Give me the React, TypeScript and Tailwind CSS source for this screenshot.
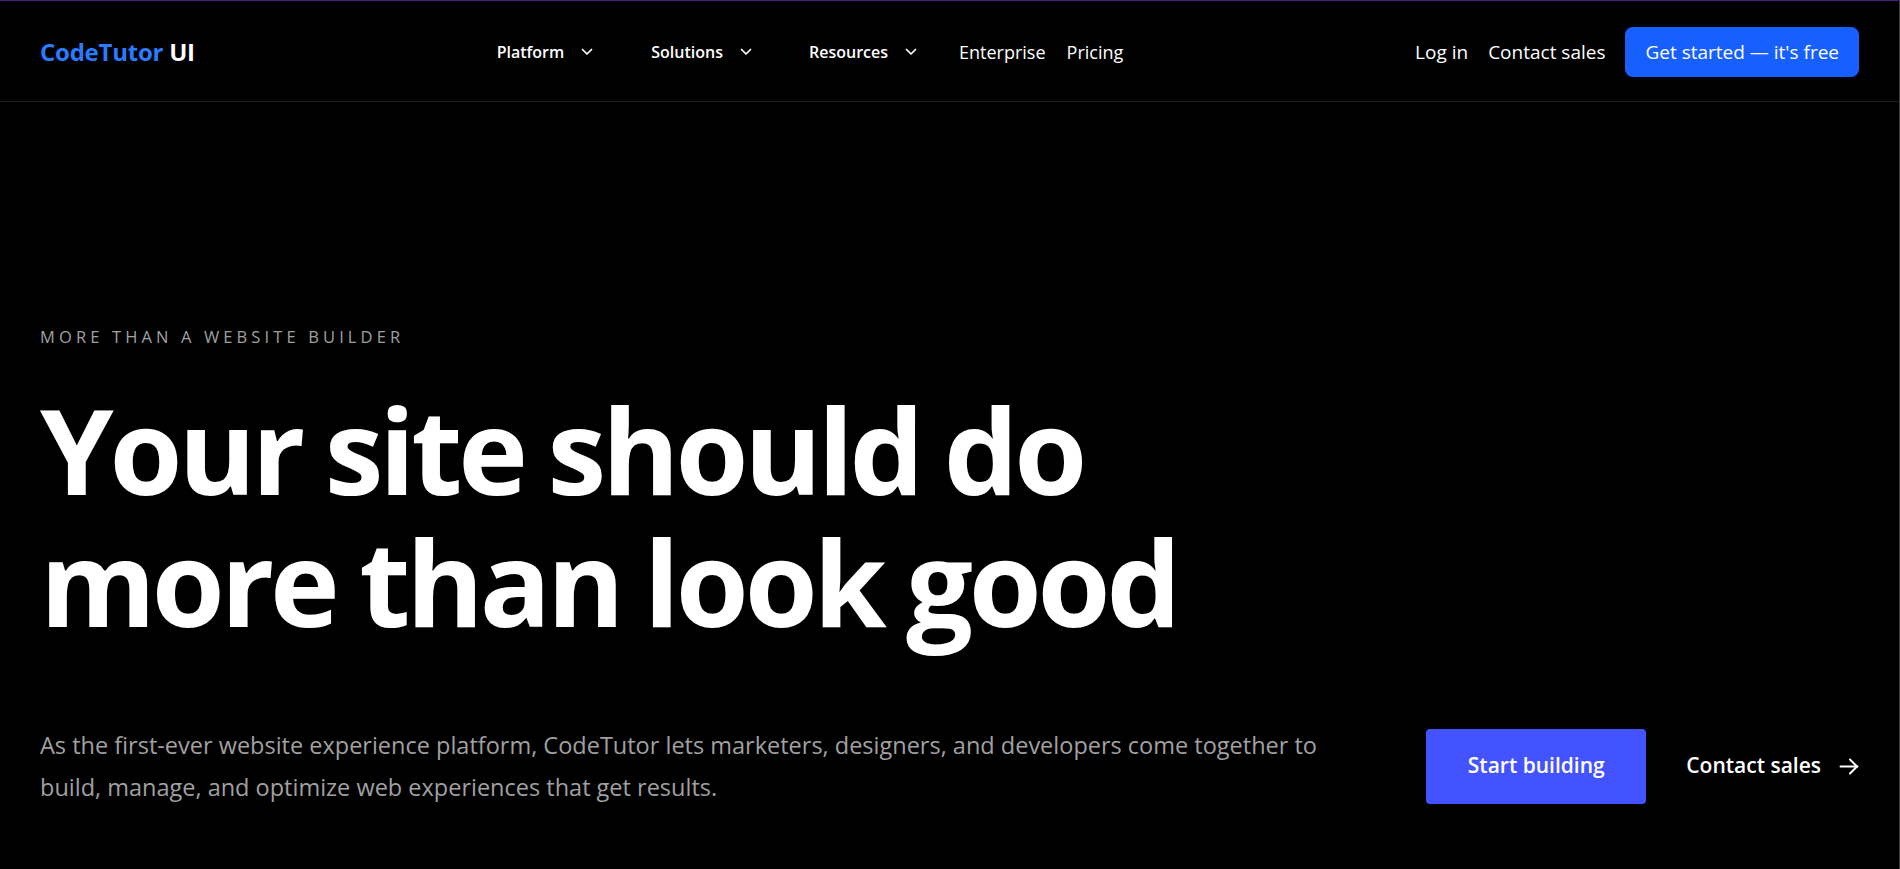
import React from 'react';

function Chevron() {
  return (
    <svg width="12" height="8" viewBox="0 0 12 8" fill="none" stroke="currentColor" strokeWidth="1.75" strokeLinecap="round" strokeLinejoin="round">
      <path d="M1.5 1.5l4.5 4.5 4.5-4.5" />
    </svg>
  );
}

function Arrow() {
  return (
    <svg width="20" height="17" viewBox="0 0 20 17" fill="none" stroke="currentColor" strokeWidth="2" strokeLinecap="round" strokeLinejoin="round">
      <path d="M1.5 8.5h17" />
      <path d="M11 1.5l7 7-7 7" />
    </svg>
  );
}

function NavDropdown({ label }: { label: string }) {
  return (
    <button className="flex items-center gap-[17px] text-[16px] font-semibold text-white">
      <span>{label}</span>
      <Chevron />
    </button>
  );
}

export default function App() {
  return (
    <div className="min-h-screen bg-black border-t border-[#41207a] border-r border-r-[#3a3a3a] font-['Open_Sans',sans-serif] text-white">
      {/* Top navigation */}
      <header className="h-[101px] pt-[2px] border-b border-[#1f1f1f] px-10 flex items-center justify-between">
        <a href="#" className="text-[24px] font-bold tracking-[-0.01em]">
          <span className="text-[#2a7bff]">CodeTutor</span> <span className="text-white">UI</span>
        </a>

        <nav className="ml-[10px] flex items-center">
          <NavDropdown label="Platform" />
          <div className="ml-[58px]">
            <NavDropdown label="Solutions" />
          </div>
          <div className="ml-[57px]">
            <NavDropdown label="Resources" />
          </div>
          <a href="#" className="ml-[42px] text-[18px]">Enterprise</a>
          <a href="#" className="ml-[21px] text-[18px]">Pricing</a>
        </nav>

        <div className="flex items-center gap-5 text-[19px]">
          <a href="#">Log in</a>
          <a href="#">Contact sales</a>
          <a href="#" className="h-[50px] px-5 flex items-center rounded-lg bg-[#175fff] text-white">
            Get started — it's free
          </a>
        </div>
      </header>

      {/* Hero */}
      <main className="px-10">
        <p className="mt-[223px] text-[16.5px] leading-6 font-medium tracking-[0.25em] text-[#a0a0a0] uppercase">
          More than a website builder
        </p>
        <h1 className="mt-[35px] text-[118px] leading-[132px] font-bold tracking-[-0.035em] [word-spacing:-3px] text-white">
          <span className="block">Your site should do</span>
          <span className="block">more than look good</span>
        </h1>

        <div className="mt-[76px] flex items-center justify-between">
          <p className="text-[23.5px] leading-[42px] text-[#a0a0a0] whitespace-nowrap">
            As the first-ever website experience platform, CodeTutor lets marketers, designers, and developers come together to
            <br />
            build, manage, and optimize web experiences that get results.
          </p>
          <div className="flex items-center gap-10">
            <a href="#" className="w-[220px] h-[75px] flex items-center justify-center rounded bg-[#4353ff] text-[21px] font-semibold text-white">
              Start building
            </a>
            <a href="#" className="flex items-center gap-[18px] text-[21px] font-semibold text-white">
              Contact sales
              <Arrow />
            </a>
          </div>
        </div>
      </main>
    </div>
  );
}
